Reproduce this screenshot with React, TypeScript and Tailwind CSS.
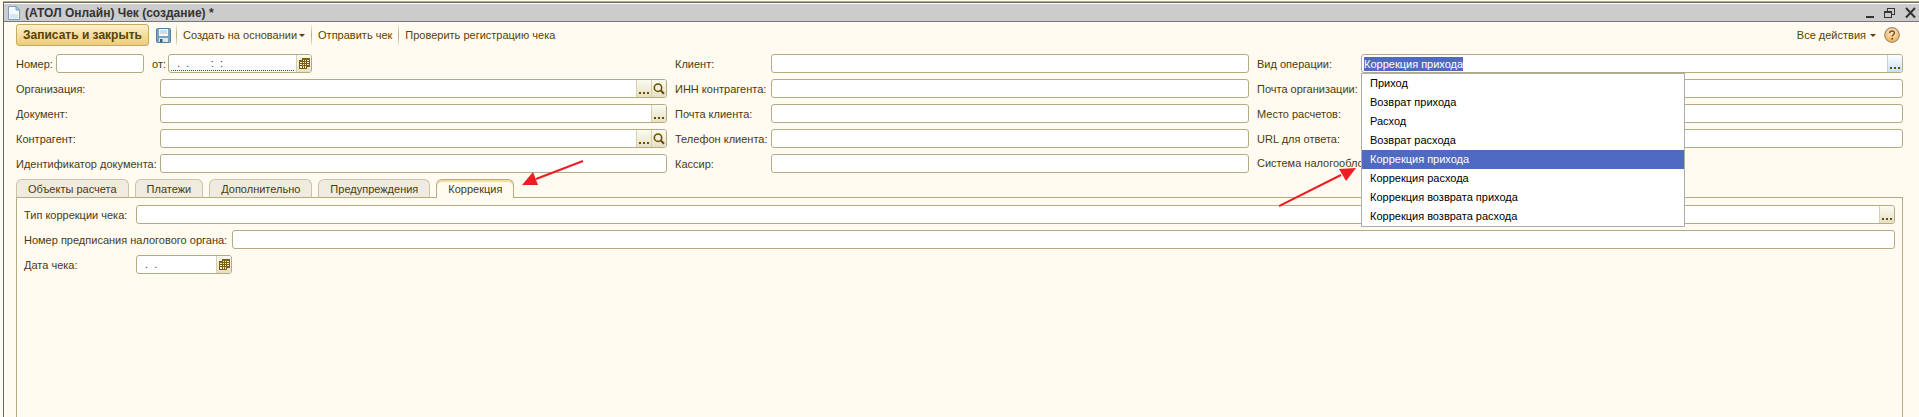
import { useEffect, useRef } from "react";
import type { ReactNode } from "react";

const operations = [
  "Приход",
  "Возврат прихода",
  "Расход",
  "Возврат расхода",
  "Коррекция прихода",
  "Коррекция расхода",
  "Коррекция возврата прихода",
  "Коррекция возврата расхода",
];

const selectedOperation = "Коррекция прихода";

const tabs = ["Объекты расчета", "Платежи", "Дополнительно", "Предупреждения", "Коррекция"];

function Dots() {
  return (
    <svg viewBox="0 0 10 2" className="mt-2 h-0.5 w-2.5" shapeRendering="crispEdges" aria-hidden="true">
      <path d="M0 0h2v2H0zM4 0h2v2H4zM8 0h2v2H8z" fill="#6b4c00" />
    </svg>
  );
}

function Magnifier() {
  return (
    <svg viewBox="0 0 12 12" className="h-3 w-3" fill="none" stroke="#6b4c00" aria-hidden="true">
      <circle cx="5" cy="4.7" r="3.7" strokeWidth="1.5" />
      <path d="M7.8 7.5L11 10.8" strokeWidth="2" />
    </svg>
  );
}

function CalendarIcon() {
  return (
    <svg viewBox="0 0 11 11" className="h-[11px] w-[11px]" shapeRendering="crispEdges" aria-hidden="true">
      <path d="M3 0h8v9h-3v2H0V2h3z" fill="#7a5f14" />
      <path
        d="M4 2h1v1H4zM6 2h1v1H6zM8 2h2v1H8zM1 4h2v1H1zM4 4h1v1H4zM6 4h1v1H6zM8 4h2v1H8zM1 6h2v1H1zM4 6h1v1H4zM6 6h1v1H6zM8 6h2v1H8zM1 8h2v2H1zM4 8h1v2H4zM6 8h1v2H6z"
        fill="#f4efd8"
      />
    </svg>
  );
}

function FieldButton({ label, active, children }: { label: string; active?: boolean; children: ReactNode }) {
  return (
    <button
      type="button"
      aria-label={label}
      className={
        active
          ? "flex w-[15px] shrink-0 items-center justify-center border-l border-[#c3d3e4] bg-linear-to-b from-white to-[#c5e0fb]"
          : "flex w-[15px] shrink-0 items-center justify-center border-l border-[#d6d0ae] bg-linear-to-b from-[#fbfaf2] to-[#e6e1c4]"
      }
    >
      {children}
    </button>
  );
}

const boxClass = "flex h-[19px] min-w-0 overflow-hidden rounded-[3px] border border-[#b3ac83] bg-white";

function Box({ id, pick, search }: { id: string; pick?: boolean; search?: boolean }) {
  return (
    <div className={`${boxClass} flex-1`}>
      <input id={id} type="text" className="min-w-0 flex-1 bg-transparent px-1 outline-none" />
      {pick && (
        <FieldButton label="Выбрать">
          <Dots />
        </FieldButton>
      )}
      {search && (
        <FieldButton label="Открыть">
          <Magnifier />
        </FieldButton>
      )}
    </div>
  );
}

function Row({ id, label, width, pick, search }: { id: string; label: string; width: string; pick?: boolean; search?: boolean }) {
  return (
    <div className="flex items-center">
      <label htmlFor={id} className={`${width} shrink-0 whitespace-nowrap`}>
        {label}
      </label>
      <Box id={id} pick={pick} search={search} />
    </div>
  );
}

function Caret() {
  return (
    <svg viewBox="0 0 6 3" className="h-[3px] w-1.5" aria-hidden="true">
      <path d="M0 0h6L3 3z" fill="#5a4300" />
    </svg>
  );
}

function Separator() {
  return <span className="h-5 w-px bg-linear-to-b from-[#eee9d2] via-[#b3ac83] to-[#eee9d2]" />;
}

function TitleBar() {
  return (
    <header className="flex h-[19px] items-center border-t border-b border-t-white border-b-[#777] bg-[#cccccc] pr-[3px] pl-1">
      <svg viewBox="0 0 12 14" className="h-3.5 w-3" aria-hidden="true">
        <path d="M.5.5h7.5l3.5 3.5v9.5H.5z" fill="#f3f9ff" stroke="#7e9cb8" />
        <path d="M2 8h8v4.500H2z" fill="#d5e7f7" />
        <path d="M8 .5V4h3.500z" fill="#b9d3ea" stroke="#7e9cb8" />
      </svg>
      <h1 className="ml-[5px] flex-1 text-[12px] leading-4 font-bold text-[#333]">(АТОЛ Онлайн) Чек (создание) *</h1>
      <div className="flex items-center gap-2.5">
        <button type="button" aria-label="Свернуть">
          <svg viewBox="0 0 8 12" className="h-3 w-2" aria-hidden="true">
            <path d="M0 9h8v2H0z" fill="#333" />
          </svg>
        </button>
        <button type="button" aria-label="Восстановить">
          <svg viewBox="0 0 11 12" className="h-3 w-[11px]" fill="none" stroke="#333" shapeRendering="crispEdges" aria-hidden="true">
            <path d="M3.500 4V1.500h7v6H8M3 1h8M.5 4.500h7v6h-7zM0 5h8" />
          </svg>
        </button>
        <button type="button" aria-label="Закрыть">
          <svg viewBox="0 0 11 12" className="h-3 w-[11px]" stroke="#333" strokeWidth="2" aria-hidden="true">
            <path d="M1 1l9 9.500M10 1L1 10.500" />
          </svg>
        </button>
      </div>
    </header>
  );
}

function Toolbar() {
  return (
    <div className="flex h-[26px] items-center text-[#5a4300]">
      <button
        type="button"
        className="h-[22px] rounded-[3px] border border-[#c9a95c] bg-linear-to-b from-[#fcf0cb] to-[#edcb7c] px-1.5 text-[12px] font-bold"
      >
        Записать и закрыть
      </button>
      <button type="button" aria-label="Записать" className="ml-[7px]">
        <svg viewBox="0 0 15 15" className="h-[15px] w-[15px]" aria-hidden="true">
          <rect x=".5" y=".5" width="14" height="14" rx="1" fill="#7ba3c0" stroke="#55819f" />
          <path d="M3 1h9v7H3z" fill="#f4f9fc" />
          <path d="M4 3h7M4 5h7" stroke="#a8bfce" />
          <path d="M3 10h9v4H3z" fill="#dce9f1" />
          <path d="M4 11h2.500v3H4z" fill="#3c5f78" />
        </svg>
      </button>
      <div className="ml-[5px] flex items-center gap-1.5">
        <Separator />
        <button type="button" className="flex items-center gap-0.5">
          Создать на основании
          <Caret />
        </button>
        <Separator />
        <button type="button">Отправить чек</button>
        <Separator />
        <button type="button">Проверить регистрацию чека</button>
      </div>
      <button type="button" className="ml-auto flex items-center gap-1">
        Все действия
        <Caret />
      </button>
      <button type="button" aria-label="Справка" className="mr-[3px] ml-2">
        <svg viewBox="0 0 16 16" className="h-4 w-4" aria-hidden="true">
          <defs>
            <radialGradient id="help" cx="50%" cy="35%" r="65%">
              <stop offset="0" stopColor="#fff0d6" />
              <stop offset="1" stopColor="#f3ab4c" />
            </radialGradient>
          </defs>
          <circle cx="8" cy="8" r="7.300" fill="url(#help)" stroke="#a3917a" strokeWidth="1.200" />
          <path d="M5.700 6.200c0-3 4.700-3 4.700-.2 0 1.800-2.300 1.700-2.300 3.600" fill="none" stroke="#7a5126" strokeWidth="1.500" />
          <circle cx="8.100" cy="11.700" r="1" fill="#7a5126" />
        </svg>
      </button>
    </div>
  );
}

function OperationField() {
  const input = useRef<HTMLInputElement>(null);

  useEffect(() => {
    input.current?.focus();
    input.current?.select();
  }, []);

  return (
    <div className="flex items-center">
      <label htmlFor="operation" className="w-[104px] shrink-0 whitespace-nowrap">
        Вид операции:
      </label>
      <div className="relative min-w-0 flex-1">
        <div className={boxClass}>
          <input
            id="operation"
            ref={input}
            type="text"
            role="combobox"
            aria-expanded="true"
            aria-controls="operation-list"
            defaultValue={selectedOperation}
            className="min-w-0 flex-1 bg-transparent px-0.5 outline-none selection:bg-[#5069c2] selection:text-white"
          />
          <FieldButton label="Выбрать" active>
            <Dots />
          </FieldButton>
        </div>
        <ul
          id="operation-list"
          role="listbox"
          aria-label="Вид операции"
          className="absolute top-full left-0 z-10 w-[324px] border border-[#adadad] bg-white text-black"
        >
          {operations.map((name) => (
            <li
              key={name}
              role="option"
              aria-selected={name === selectedOperation}
              className={name === selectedOperation ? "bg-[#5069c2] px-2 leading-[19px] text-white" : "px-2 leading-[19px]"}
            >
              {name}
            </li>
          ))}
        </ul>
        <svg viewBox="0 0 78 42" className="absolute top-[112px] right-full z-20 mr-1 h-[42px] w-[78px]" aria-hidden="true">
          <path d="M0 40L62 9" stroke="#ed1c24" strokeWidth="2" />
          <path d="M77 2L60 3L67 15z" fill="#ed1c24" />
        </svg>
      </div>
    </div>
  );
}

function DateBox({ id, value, button, required }: { id: string; value: string; button: string; required?: boolean }) {
  return (
    <>
      <div className="flex min-w-0 flex-1 px-0.5 pb-px">
        <input
          id={id}
          type="text"
          defaultValue={value}
          className={
            required
              ? "w-full min-w-0 border-b border-dotted border-[#e00000] bg-transparent whitespace-pre outline-none"
              : "w-full min-w-0 bg-transparent whitespace-pre outline-none"
          }
        />
      </div>
      <FieldButton label={button}>
        <CalendarIcon />
      </FieldButton>
    </>
  );
}

function Tabs() {
  return (
    <div role="tablist" className="relative z-[1] -mb-px flex items-end gap-1.5">
      {tabs.map((name) =>
        name === "Коррекция" ? (
          <button
            key={name}
            type="button"
            role="tab"
            aria-selected="true"
            className="relative h-[19px] rounded-t-[6px] border border-b-0 border-[#b3ac83] bg-[#fffbf0] px-[11px] shadow-[inset_0_2px_0_#f8dc9c]"
          >
            {name}
            <svg viewBox="0 0 62 26" className="absolute -top-5 left-full ml-[9px] h-[26px] w-[62px]" aria-hidden="true">
              <path d="M61 1L14 19" stroke="#ed1c24" strokeWidth="2" />
              <path d="M0 25L11 12L16 25z" fill="#ed1c24" />
            </svg>
          </button>
        ) : (
          <button
            key={name}
            type="button"
            role="tab"
            aria-selected="false"
            className="h-[19px] rounded-t-[6px] border border-[#c9c4a3] border-b-[#b3ac83] bg-[#f0ebe1] px-[11px]"
          >
            {name}
          </button>
        ),
      )}
    </div>
  );
}

export default function App() {
  return (
    <div className="flex min-h-screen flex-col border-t border-[#fffbf0] bg-[#fffbf0] pl-[3px] font-['Liberation_Sans',Arial,sans-serif] text-[11px] leading-[14px] text-[#4a3a10]">
      <div className="flex flex-1 flex-col border-t border-[#b3ac83]">
        <div className="flex flex-1 flex-col border-t border-l border-[#666]">
          <TitleBar />
          <main className="flex flex-1 flex-col pr-4 pl-3">
            <Toolbar />
            <form className="mt-1.5 grid grid-cols-[651fr_574fr_646fr] gap-x-2">
              <div className="flex min-w-0 flex-col gap-1.5">
                <div className="flex items-center">
                  <label htmlFor="number" className="w-10 shrink-0">
                    Номер:
                  </label>
                  <div className={`${boxClass} w-[88px]`}>
                    <input id="number" type="text" className="min-w-0 flex-1 bg-transparent px-1 outline-none" />
                  </div>
                  <label htmlFor="date" className="ml-2 w-4 shrink-0">
                    от:
                  </label>
                  <div className={`${boxClass} w-36`}>
                    <DateBox id="date" value="  .  .       :  :" button="Календарь" required />
                  </div>
                </div>
                <Row id="organization" label="Организация:" width="w-36" pick search />
                <Row id="document" label="Документ:" width="w-36" pick />
                <Row id="contractor" label="Контрагент:" width="w-36" pick search />
                <Row id="document-id" label="Идентификатор документа:" width="w-36" />
              </div>
              <div className="flex min-w-0 flex-col gap-1.5">
                <Row id="client" label="Клиент:" width="w-24" />
                <Row id="inn" label="ИНН контрагента:" width="w-24" />
                <Row id="client-mail" label="Почта клиента:" width="w-24" />
                <Row id="client-phone" label="Телефон клиента:" width="w-24" />
                <Row id="cashier" label="Кассир:" width="w-24" />
              </div>
              <div className="flex min-w-0 flex-col gap-1.5">
                <OperationField />
                <Row id="organization-mail" label="Почта организации:" width="w-[104px]" />
                <Row id="place" label="Место расчетов:" width="w-[104px]" />
                <Row id="reply-url" label="URL для ответа:" width="w-[104px]" />
                <span className="w-[104px] overflow-hidden leading-[19px] whitespace-nowrap">Система налогообложения:</span>
              </div>
            </form>
            <div className="mt-1.5 flex flex-1 flex-col">
              <Tabs />
              <section role="tabpanel" aria-label="Коррекция" className="flex flex-1 flex-col gap-1.5 border border-b-0 border-[#b3ac83] px-[7px] pt-[7px]">
                <Row id="correction-type" label="Тип коррекции чека:" width="w-28" pick />
                <Row id="order-number" label="Номер предписания налогового органа:" width="w-52" />
                <div className="flex items-center">
                  <label htmlFor="check-date" className="w-28 shrink-0">
                    Дата чека:
                  </label>
                  <div className={`${boxClass} w-24`}>
                    <DateBox id="check-date" value="  .  ." button="Календарь" />
                  </div>
                </div>
              </section>
            </div>
          </main>
        </div>
      </div>
    </div>
  );
}
